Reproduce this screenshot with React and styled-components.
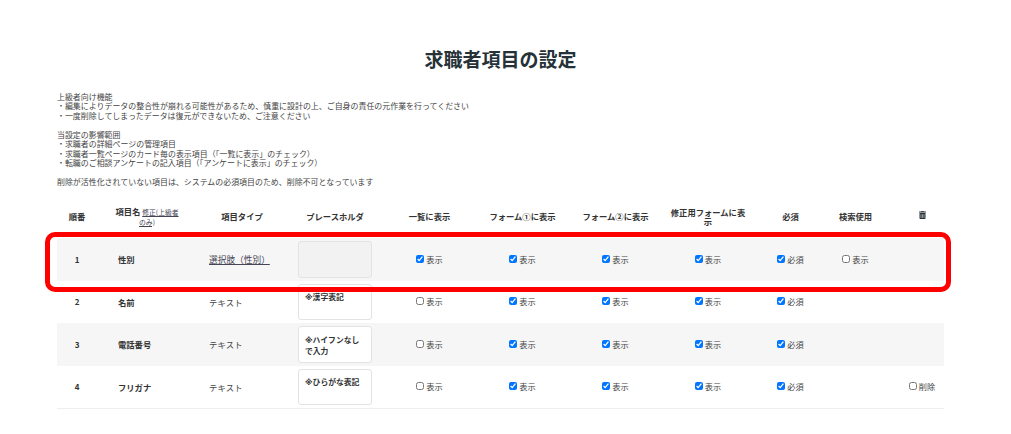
import React from "react";
import styled, { createGlobalStyle } from "styled-components";
import { FaTrashAlt } from "react-icons/fa";

const Global = createGlobalStyle`
  html, body { margin: 0; padding: 0; background: #fff; }
  body { font-family: "Noto Sans CJK JP", "Noto Sans", sans-serif; color: #333; overflow: hidden; }
`;
const Page = styled.div`
  position: relative;
  width: 1011px;
  height: 434px;
  padding: 45px 67px 0 57px;
  box-sizing: border-box;
`;
const Title = styled.h1`
  margin: 0 0 19px;
  font-size: 19px;
  line-height: 28px;
  font-weight: 700;
  text-align: center;
  color: #263238;
`;
const Notes = styled.div`
  font-size: 7.95px;
  line-height: 9.45px;
  color: #444;
  white-space: pre-line;
  height: 109px;
`;
const columns = "40px 100px 90px 96px 93px 93px 93px 92px 73px 57px 60px";
const Head = styled.div`
  display: grid;
  grid-template-columns: ${columns};
  align-items: center;
  height: 36px;
  padding-bottom: 4px;
  margin-bottom: 1px;
  border-bottom: 1px solid #eee;
  box-sizing: border-box;
  width: 887px;
`;
const HeadCell = styled.div`
  font-size: 8.3px;
  line-height: 8.5px;
  font-weight: 700;
  text-align: center;
  color: #333;
  padding: 0 ${(p) => p.$pad ?? 8}px;
`;
const SmallLink = styled.span`
  font-size: 6.8px;
  font-weight: 400;
  text-decoration: underline;
  color: #445;
`;
const Row = styled.div`
  display: grid;
  grid-template-columns: ${columns};
  align-items: center;
  height: ${(p) => (p.$last ? 43.5 : 42.5)}px;
  box-sizing: border-box;
  width: 887px;
  background: ${(p) => (p.$shaded ? "#f6f6f6" : "#fff")};
  border-bottom: ${(p) => (p.$last ? "1px solid #eee" : "none")};
`;
const No = styled.div`
  font-size: 8px;
  font-weight: 700;
  text-align: center;
`;
const Name = styled.div`
  font-size: 8.3px;
  font-weight: 700;
  padding-left: 21px;
`;
const Type = styled.div`
  font-size: 8.3px;
  padding-left: 12px;
  letter-spacing: 0.2px;
  color: #444;
`;
const TypeLink = styled.a`
  font-size: 8.7px;
  padding-left: 12px;
  color: #445;
  text-decoration: underline;
`;
const Input = styled.div`
  width: 74px;
  height: 36.5px;
  margin-left: 11px;
  box-sizing: border-box;
  padding: 7.5px 6px 0 6px;
  border: 1px solid #e3e3e3;
  border-radius: 3px;
  background: ${(p) => (p.$disabled ? "#f2f2f2" : "#fff")};
  font-family: "DejaVu Sans", "Noto Sans CJK JP", sans-serif;
  font-size: 7.8px;
  line-height: 11px;
  font-weight: 700;
  color: #333;
`;
const CheckCell = styled.label`
  display: flex;
  justify-content: center;
  align-items: center;
  gap: 2px;
  font-size: 8.2px;
  color: #444;
  margin-top: -1px;
  padding-left: ${(p) => p.$shift || 0}px;
`;
const Box = styled.input`
  width: 8px;
  height: 8px;
  margin: 0;
`;
const Highlight = styled.div`
  position: absolute;
  left: 45px;
  top: 232px;
  width: 906px;
  height: 60px;
  box-sizing: border-box;
  border: 5.5px solid #f00;
  border-radius: 10px;
  pointer-events: none;
`;
const Trash = styled(FaTrashAlt)`
  width: 7px;
  height: 8px;
  color: #263238;
  display: block;
  margin: 0 auto;
  transform: translate(8px, -2px);
`;

const Check = ({ label, on, shift }) => (
  <CheckCell $shift={shift}>
    <Box type="checkbox" defaultChecked={on} />
    {label}
  </CheckCell>
);

const rows = [
  { no: 1, name: "性別", type: "選択肢（性別）", link: true, ph: "", list: true, search: true },
  { no: 2, name: "名前", type: "テキスト", ph: "※漢字表記" },
  { no: 3, name: "電話番号", type: "テキスト", ph: "※ハイフンなしで入力" },
  { no: 4, name: "フリガナ", type: "テキスト", ph: "※ひらがな表記", del: true },
];

export default function App() {
  return (
    <Page>
      <Global />
      <Title>求職者項目の設定</Title>
      <Notes>{`上級者向け機能
・編集によりデータの整合性が崩れる可能性があるため、慎重に設計の上、ご自身の責任の元作業を行ってください
・一度削除してしまったデータは復元ができないため、ご注意ください

当設定の影響範囲
・求職者の詳細ページの管理項目
・求職者一覧ページのカード毎の表示項目（「一覧に表示」のチェック）
・転職のご相談アンケートの記入項目（「アンケートに表示」のチェック）

削除が活性化されていない項目は、システムの必須項目のため、削除不可となっています`}</Notes>
      <Head>
        <HeadCell>順番</HeadCell>
        <HeadCell $pad={6}>項目名 <SmallLink>修正(上級者<br />のみ)</SmallLink></HeadCell>
        <HeadCell>項目タイプ</HeadCell>
        <HeadCell>プレースホルダ</HeadCell>
        <HeadCell>一覧に表示</HeadCell>
        <HeadCell>フォーム①に表示</HeadCell>
        <HeadCell>フォーム②に表示</HeadCell>
        <HeadCell>修正用フォームに表示</HeadCell>
        <HeadCell>必須</HeadCell>
        <HeadCell $pad={2}>検索使用</HeadCell>
        <HeadCell $pad={0}><Trash /></HeadCell>
      </Head>
      {rows.map((r) => (
        <Row key={r.no} $shaded={r.no % 2 === 1} $last={r.no === 4}>
          <No>{r.no}</No>
          <Name>{r.name}</Name>
          {r.link ? <TypeLink>{r.type}</TypeLink> : <Type>{r.type}</Type>}
          <Input $disabled={r.no === 1}>{r.ph}</Input>
          <Check label="表示" on={!!r.list} />
          <Check label="表示" on />
          <Check label="表示" on />
          <Check label="表示" on />
          <Check label="必須" on />
          {r.search ? <Check label="表示" /> : <span />}
          {r.del ? <Check label="削除" shift={16} /> : <span />}
        </Row>
      ))}
      <Highlight />
    </Page>
  );
}
